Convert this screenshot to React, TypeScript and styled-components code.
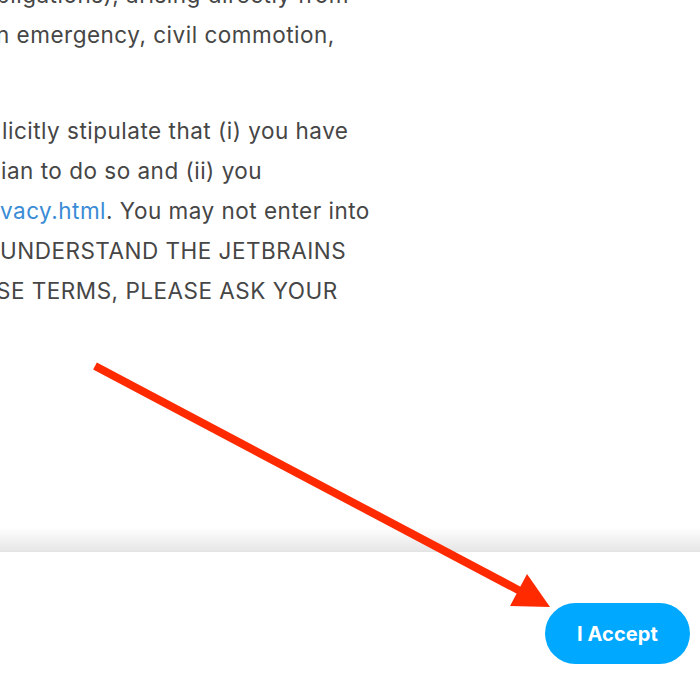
import React from "react";
import styled, { createGlobalStyle } from "styled-components";

const Global = createGlobalStyle`
  html, body { margin: 0; padding: 0; background: #fff; }
  body { width: 700px; height: 700px; overflow: hidden; font-family: Inter, "Noto Sans", sans-serif; }
`;

const Page = styled.div`
  position: relative;
  width: 700px;
  height: 700px;
  display: flex;
  flex-direction: column;
  overflow: hidden;
`;

const Content = styled.div`
  height: 551px;
  overflow: hidden;
  display: flex;
  flex-direction: column;
  gap: 56px;
  position: relative;
`;

const Paragraph = styled.div<{ $top?: number }>`
  display: flex;
  flex-direction: column;
  margin-top: ${(p) => p.$top ?? 0}px;
`;

const Line = styled.div<{ $shift: number }>`
  font-size: 22.5px;
  letter-spacing: 0.5px;
  line-height: 40px;
  height: 40px;
  color: #464646;
  white-space: nowrap;
  margin-left: ${(p) => p.$shift}px;
`;

const Link = styled.span`
  color: #3a8bd6;
`;

const Fade = styled.div`
  position: absolute;
  left: 0;
  right: 0;
  bottom: 0;
  height: 24px;
  background: linear-gradient(to bottom, rgba(232, 232, 232, 0), #e6e6e6);
`;

const Footer = styled.div`
  flex: 1;
  background: #fff;
  border-top: 1px solid #e3e3e3;
  display: flex;
  justify-content: flex-end;
  align-items: flex-start;
  padding: 51px 10px 0 0;
`;

const Button = styled.button`
  height: 61px;
  width: 145px;
  border: none;
  border-radius: 31px;
  background: #00a8ff;
  color: #fff;
  font-family: Inter, "Noto Sans", sans-serif;
  font-weight: 700;
  font-size: 20px;
  letter-spacing: 0.1px;
  cursor: pointer;
  padding: 0;
`;

const Arrow = styled.svg`
  position: absolute;
  left: 0;
  top: 0;
  pointer-events: none;
`;

export default function App() {
  return (
    <Page>
      <Global />
      <Content>
        <Paragraph $top={-25}>
          <Line $shift={-18}>obligations), arising directly from</Line>
          <Line $shift={-4}>n emergency, civil commotion,</Line>
        </Paragraph>
        <Paragraph>
          <Line $shift={2}>licitly stipulate that (i) you have</Line>
          <Line $shift={1}>ian to do so and (ii) you</Line>
          <Line $shift={0}>
            <Link>vacy.html</Link>. You may not enter into
          </Line>
          <Line $shift={0}>UNDERSTAND THE JETBRAINS</Line>
          <Line $shift={-4}>SE TERMS, PLEASE ASK YOUR</Line>
        </Paragraph>
        <Fade />
      </Content>
      <Footer>
        <Button>I Accept</Button>
      </Footer>
      <Arrow width="700" height="700" viewBox="0 0 700 700">
        <line x1="95" y1="366" x2="522" y2="592" stroke="#ff2a00" strokeWidth="8" />
        <polygon points="527,574 510,606 550,607" fill="#ff2a00" />
      </Arrow>
    </Page>
  );
}
